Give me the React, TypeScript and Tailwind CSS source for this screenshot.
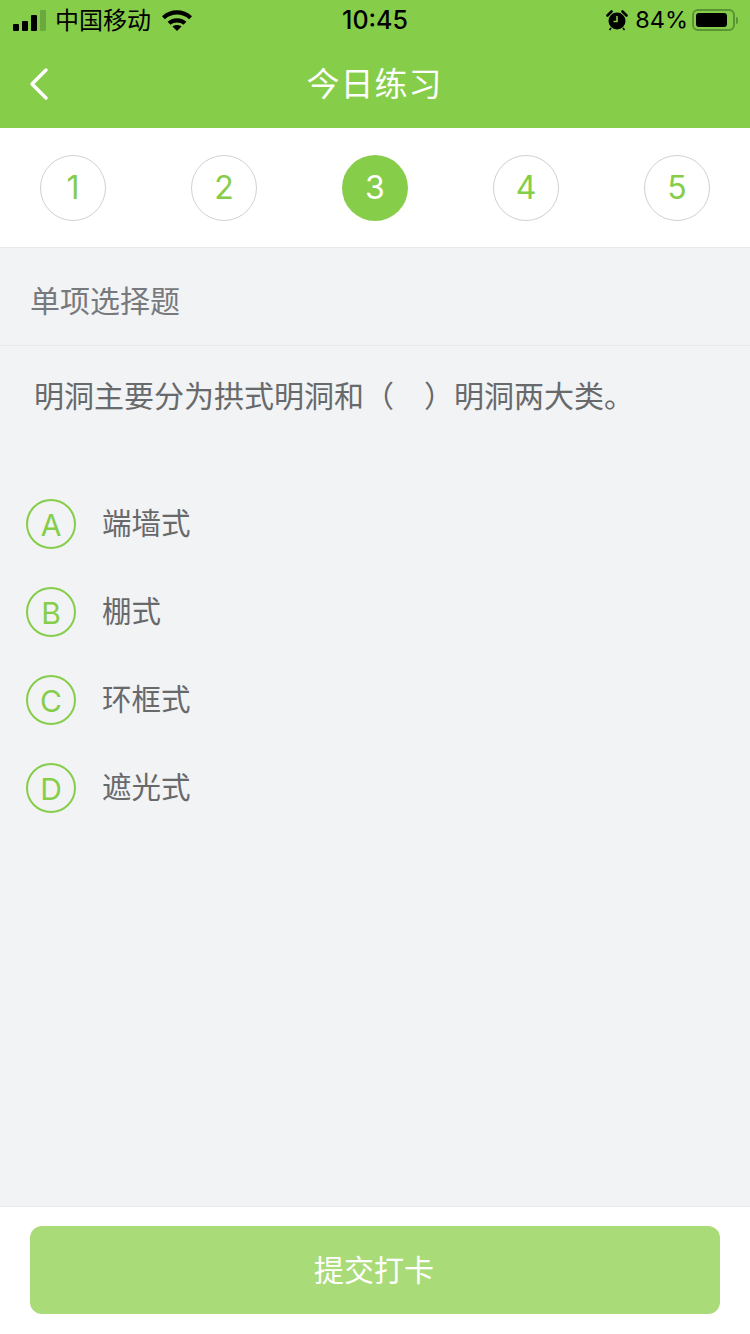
const FONT = "font-['Inter','Liberation_Sans','Noto_Sans_CJK_SC',sans-serif]"

const STEPS = [1, 2, 3, 4, 5]
const OPTIONS = [
  { key: 'A', text: '端墙式' },
  { key: 'B', text: '棚式' },
  { key: 'C', text: '环框式' },
  { key: 'D', text: '遮光式' },
]

function StatusBar() {
  return (
    <div className="relative flex h-10 items-center justify-between pl-[13px] pr-[12px] text-black">
      <div className="flex items-center">
        <div className="flex items-end gap-[3px] pt-[1px]">
          <span className="h-[7px] w-[6px] rounded-[1px] bg-black" />
          <span className="h-[10px] w-[6px] rounded-[1px] bg-black" />
          <span className="h-[16px] w-[6px] rounded-[1px] bg-black" />
          <span className="h-[21px] w-[6px] rounded-[1px] bg-[#6aa93f]" />
        </div>
        <span className="ml-[9px] pt-[1px] text-[24px] leading-none">中国移动</span>
        <svg className="ml-[11px]" width="30" height="22" viewBox="0 0 30 22">
          <path d="M0 7.200C8.400-.6 21.600-.6 30 7.200l-2.800 3C19.900 4 10.100 4 2.800 10.200Z" fill="#000" />
          <path d="M5.600 12.800c5.300-4.600 13.500-4.600 18.800 0l-2.900 3c-3.700-3.100-9.300-3.100-13 0Z" fill="#000" />
          <path d="M10.500 17.500c2.500-2 6.500-2 9 0L15 22Z" fill="#000" />
        </svg>
      </div>
      <span className="absolute left-0 right-0 text-center text-[25px] font-medium leading-none">10:45</span>
      <div className="flex items-center">
        <svg width="22" height="22" viewBox="0 0 22 22">
          <circle cx="11" cy="12" r="8.500" fill="#000" />
          <path d="M11 7v5.500H7.500" stroke="#86cd4a" strokeWidth="1.600" fill="none" />
          <path d="M1.500 6.500 5.500 2.500M20.500 6.500l-4-4" stroke="#000" strokeWidth="2.600" strokeLinecap="round" />
          <path d="M5 19l-1.500 2M17 19l1.500 2" stroke="#000" strokeWidth="1.600" />
        </svg>
        <span className="ml-[7px] text-[23.5px] leading-none">84%</span>
        <div className="ml-[4px] flex h-[22px] w-[43px] items-center rounded-[6px] border-2 border-[#5a9433] p-[2px]">
          <div className="h-full w-[31px] rounded-[3px] bg-black" />
        </div>
        <span className="ml-[1px] h-[7px] w-[2px] rounded-r-[2px] bg-[#5a9433]" />
      </div>
    </div>
  )
}

export default function App() {
  return (
    <div className={`${FONT} flex h-[1334px] w-[750px] flex-col overflow-hidden bg-[#f2f3f5]`}>
      <header className="h-[128px] shrink-0 bg-[#86cd4a]">
        <StatusBar />
        <div className="relative flex h-[88px] items-center justify-center">
          <svg className="absolute left-[28px] top-[27px]" width="22" height="34" viewBox="0 0 22 34">
            <path d="M18 3 4 17l14 14" stroke="#fff" strokeWidth="3.500" strokeLinecap="round" strokeLinejoin="round" fill="none" />
          </svg>
          <h1 className="pr-[1px] text-[33px] font-normal leading-none tracking-[1px] text-white">今日练习</h1>
        </div>
      </header>

      <div className="flex h-[120px] shrink-0 items-center justify-between border-b border-[#e8e9eb] bg-white px-10">
        {STEPS.map((n) =>
          n === 3 ? (
            <div key={n} className="flex h-[66px] w-[66px] items-center justify-center rounded-full bg-[#86cd4a] pt-[1px] text-[32px] text-white">
              {n}
            </div>
          ) : (
            <div key={n} className="flex h-[66px] w-[66px] items-center justify-center rounded-full border border-[#cfd1d3] pt-[1px] text-[32px] text-[#86cd4a]">
              {n}
            </div>
          ),
        )}
      </div>

      <div className="flex h-[98px] shrink-0 items-center border-b border-[#e9eaec] pl-[30px] pt-[10px] text-[30px] text-[#77797c]">
        单项选择题
      </div>

      <p className="pl-[34px] pt-[32px] text-[30px] leading-[36px] text-[#68696b]">
        明洞主要分为拱式明洞和（<span className="inline-block w-[30px]" />）明洞两大类。
      </p>

      <ul className="flex flex-1 flex-col gap-[38px] pl-[26px] pt-[85px]">
        {OPTIONS.map((o) => (
          <li key={o.key} className="flex h-[50px] items-center">
            <span className="flex h-[50px] w-[50px] items-center justify-center rounded-full border-2 border-[#86cd4a] pt-[2px] text-[30px] leading-none text-[#86cd4a]">
              {o.key}
            </span>
            <span className="ml-[26px] text-[29.5px] leading-none text-[#68696b]">{o.text}</span>
          </li>
        ))}
      </ul>

      <footer className="flex h-[128px] shrink-0 border-t border-[#e8e9eb] bg-white px-[30px] pt-[19px]">
        <button className="flex h-[88px] w-full items-center justify-center rounded-[12px] bg-[#a9db78] pr-[2px] text-[30px] text-white">
          提交打卡
        </button>
      </footer>
    </div>
  )
}
